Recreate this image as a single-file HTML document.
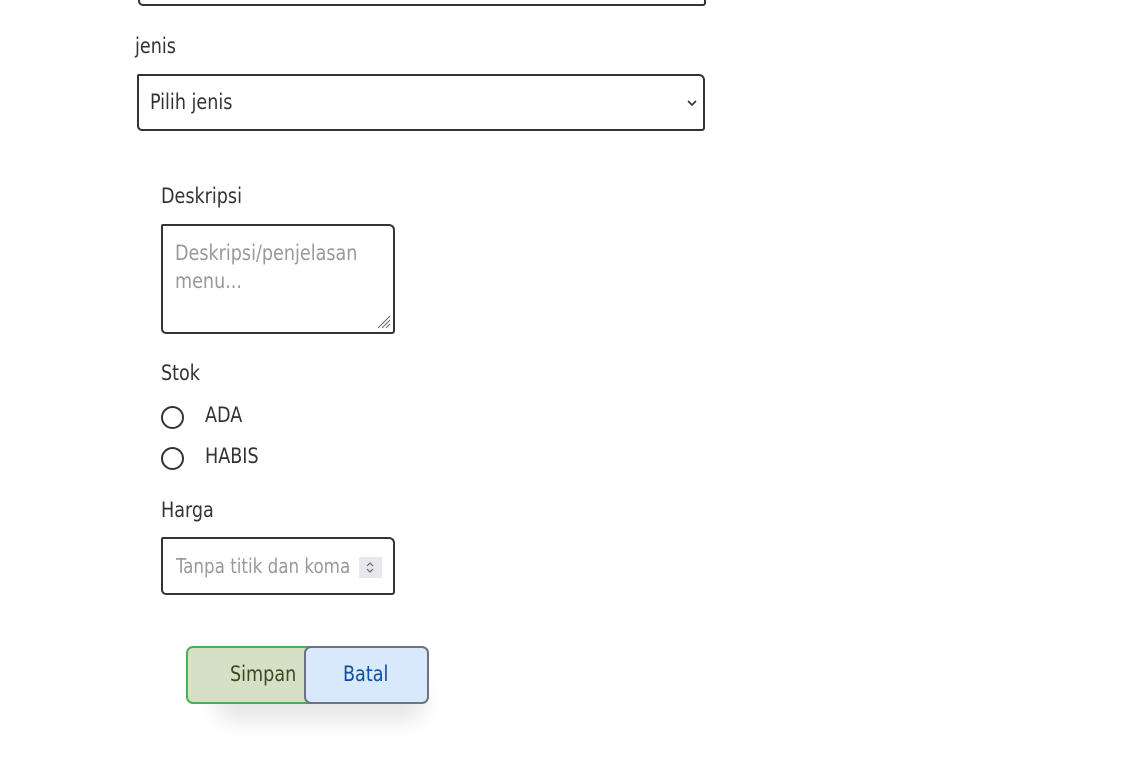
<!DOCTYPE html>
<html><head><meta charset="utf-8"><style>
body{margin:0;width:1140px;height:761px;background:#fff;position:relative;overflow:hidden;font-family:"DejaVu Sans Condensed","DejaVu Sans",sans-serif;color:#333;font-size:21px}
.a{position:absolute;transform:scaleX(0.93);transform-origin:left center;white-space:nowrap}
.b{position:absolute}
.box{position:absolute;border:2px solid #333;border-radius:2px 6px 3px 5px;background:#fff;box-sizing:border-box}
.ph{color:#999}
.radio{position:absolute;width:23px;height:23px;border:2px solid #333;border-radius:50%;box-sizing:border-box}
</style></head><body>
<div class="box" style="left:138px;top:-30px;width:568px;height:36px"></div>
<div class="a" style="left:135px;top:34px">jenis</div>
<div class="box" style="left:137px;top:74px;width:568px;height:57px"></div>
<div class="a" style="left:150px;top:90px">Pilih jenis</div>
<svg class="b" style="left:686px;top:98px" width="12" height="10"><path d="M2 3l4 4 4-4" fill="none" stroke="#333" stroke-width="1.6"/></svg>
<div class="a" style="left:161px;top:184px">Deskripsi</div>
<div class="box" style="left:161px;top:224px;width:234px;height:110px"></div>
<div class="a ph" style="left:175px;top:239px;line-height:28px">Deskripsi/penjelasan<br>menu...</div>
<svg class="b" style="left:377px;top:315px" width="14" height="14"><path d="M1 13L13 1M5 13L13 5M9 13L13 9" stroke="#666" stroke-width="1"/></svg>
<div class="a" style="left:161px;top:361px">Stok</div>
<div class="radio" style="left:161px;top:406px"></div>
<div class="a" style="left:205px;top:403px">ADA</div>
<div class="radio" style="left:161px;top:447px"></div>
<div class="a" style="left:205px;top:444px">HABIS</div>
<div class="a" style="left:161px;top:498px">Harga</div>
<div class="box" style="left:161px;top:537px;width:234px;height:58px"></div>
<div class="a ph" style="left:176px;top:554px;font-size:20px">Tanpa titik dan koma</div>
<div class="b" style="left:359px;top:557px;width:23px;height:21px;background:#e8e8ec"></div>
<svg class="b" style="left:364px;top:559px" width="12" height="17"><path d="M3 7l3-3 3 3M3 10l3 3 3-3" fill="none" stroke="#666" stroke-width="1.2"/></svg>
<div class="b" style="left:215px;top:665px;width:210px;height:36px;box-shadow:0 20px 22px rgba(0,0,0,0.10);border-radius:18px"></div>
<div class="b" style="left:186px;top:646px;width:140px;height:58px;background:#d5e0c6;border:2px solid #4caf50;border-radius:7px;box-sizing:border-box"></div>
<div class="a" style="left:230px;top:662px;color:#3b4a1f">Simpan</div>
<div class="b" style="left:304px;top:646px;width:125px;height:58px;background:#d8e9fb;border:2px solid #6c7480;border-radius:7px;box-sizing:border-box"></div>
<div class="a" style="left:343px;top:662px;color:#0a4fa0">Batal</div>
</body></html>
